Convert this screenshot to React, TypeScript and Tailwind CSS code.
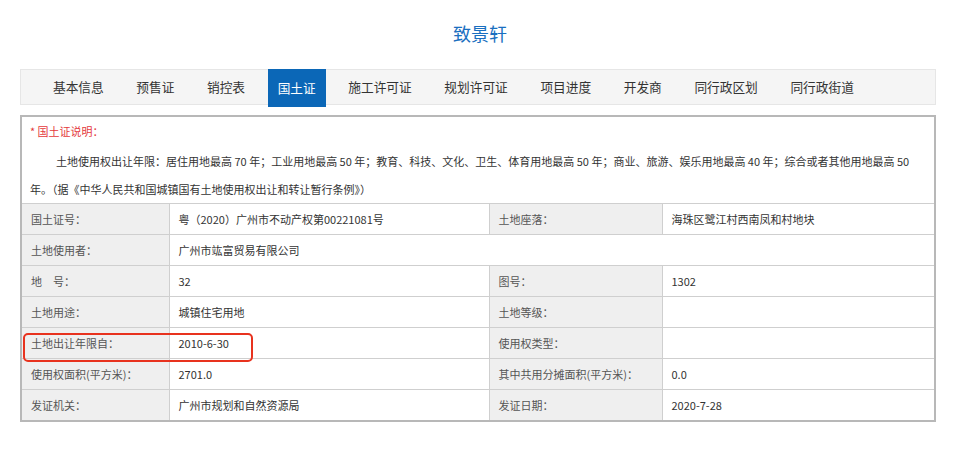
const tabs = [
  "基本信息",
  "预售证",
  "销控表",
  "国土证",
  "施工许可证",
  "规划许可证",
  "项目进度",
  "开发商",
  "同行政区划",
  "同行政街道",
];

type Row = [string, string, string?, string?];

const rows: Row[] = [
  ["国土证号：", "粤（2020）广州市不动产权第00221081号", "土地座落：", "海珠区鹭江村西南凤和村地块"],
  ["土地使用者：", "广州市竑富贸易有限公司"],
  ["地　号：", "32", "图号：", "1302"],
  ["土地用途：", "城镇住宅用地", "土地等级：", ""],
  ["土地出让年限自：", "2010-6-30", "使用权类型：", ""],
  ["使用权面积(平方米)：", "2701.0", "其中共用分摊面积(平方米)：", "0.0"],
  ["发证机关：", "广州市规划和自然资源局", "发证日期：", "2020-7-28"],
];

const labelCell = "h-[31px] border border-[#cfcfcf] bg-[#efefef] px-[9px] text-left font-normal text-[#555]";
const valueCell = "h-[31px] border border-[#cfcfcf] bg-white px-[9px] text-[#333]";

export default function App() {
  return (
    <main className="h-[456px] w-[960px] overflow-hidden bg-white font-['Noto_Sans_CJK_SC',sans-serif]">
      <h1 className="h-[69px] pt-[22px] text-center text-[18px] leading-[22px] text-[#1a6fc0]">致景轩</h1>

      <nav className="mx-[20px] flex h-[36px] w-[916px] items-start gap-[12.6px] border border-[#e6e6e6] bg-[#f5f5f5] pl-[22px]">
        {tabs.map((t) =>
          t === "国土证" ? (
            <span
              key={t}
              className="-mt-px flex h-[38px] items-center bg-[#0b67b7] px-[10px] text-[12.7px] text-white"
            >
              {t}
            </span>
          ) : (
            <span key={t} className="flex h-[34px] items-center px-[10px] text-[12.7px] text-[#333]">
              {t}
            </span>
          )
        )}
      </nav>

      <section className="relative mx-[20px] mt-[10px] w-[916px]">
        <table className="w-full table-fixed border-collapse border-2 border-[#b8b8b8] text-[11px]">
          <colgroup>
            <col className="w-[148px]" />
            <col className="w-[320px]" />
            <col className="w-[173px]" />
            <col />
          </colgroup>
          <tbody>
            <tr>
              <td colSpan={4} className="border border-[#cfcfcf] px-[8px] align-top">
                <p className="leading-[28px] text-[#e4393c]">* 国土证说明：</p>
                <p className="mt-[2px] indent-[26px] leading-[28px] text-[#333]">
                  土地使用权出让年限：居住用地最高 70 年；工业用地最高 50 年；教育、科技、文化、卫生、体育用地最高 50 年；商业、旅游、娱乐用地最高 40 年；综合或者其他用地最高 50 年。（据《中华人民共和国城镇国有土地使用权出让和转让暂行条例》）
                </p>
              </td>
            </tr>
            {rows.map(([l1, v1, l2, v2]) => (
              <tr key={l1}>
                <th className={labelCell}>{l1}</th>
                {l2 === undefined ? (
                  <td colSpan={3} className={valueCell}>
                    {v1}
                  </td>
                ) : (
                  <>
                    <td className={valueCell}>{v1}</td>
                    <th className={labelCell}>{l2}</th>
                    <td className={valueCell}>{v2}</td>
                  </>
                )}
              </tr>
            ))}
          </tbody>
        </table>
        {/* 标注框 */}
        <div className="pointer-events-none absolute top-[218px] left-[3px] h-[29px] w-[230px] rounded-[5px] border-2 border-[#e8321e]" />
      </section>
    </main>
  );
}
